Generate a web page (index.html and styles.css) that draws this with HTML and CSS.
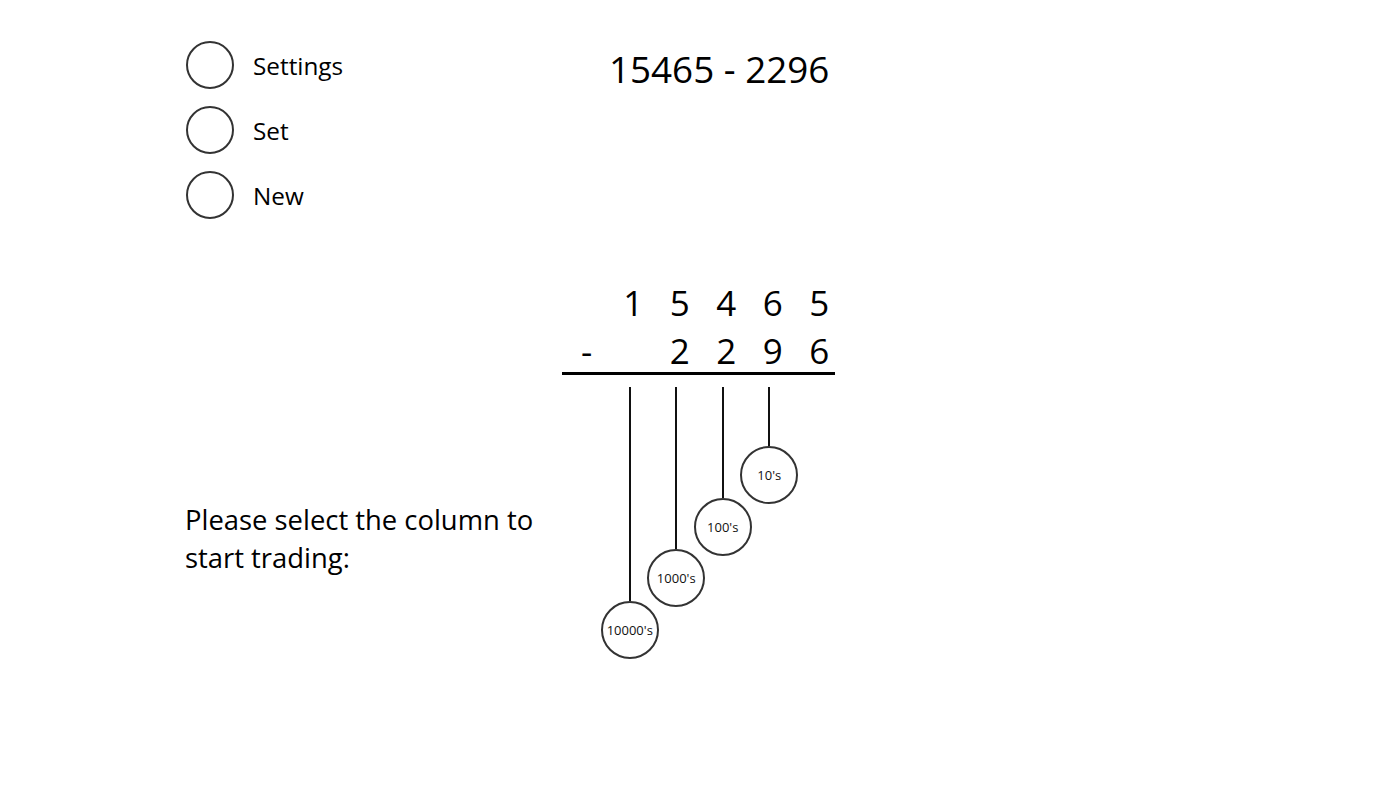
FILE: index.html
```html
<!DOCTYPE html>
<html lang="en">
<head>
    <meta charset="UTF-8">
    <title>Subtraction - Trading</title>
    <link rel="stylesheet" href="styles.css">
</head>
<body>
    <div class="page">
        <div class="top">
            <div class="menu">
                <div class="menu-item"><span class="round-btn"></span><span class="menu-label">Settings</span></div>
                <div class="menu-item"><span class="round-btn"></span><span class="menu-label">Set</span></div>
                <div class="menu-item"><span class="round-btn"></span><span class="menu-label">New</span></div>
            </div>
            <div class="title">15465 - 2296</div>
        </div>

        <div class="work">
            <p class="prompt">Please select the column to start trading:</p>

            <div class="sum">
                <div class="row">
                    <span></span><span>1</span><span>5</span><span>4</span><span>6</span><span>5</span>
                </div>
                <div class="row">
                    <span>-</span><span></span><span>2</span><span>2</span><span>9</span><span>6</span>
                </div>
                <div class="rule"></div>

                <div class="columns">
                    <span></span>
                    <div class="pend p10000"><span class="string"></span><button class="bob">10000's</button></div>
                    <div class="pend p1000"><span class="string"></span><button class="bob">1000's</button></div>
                    <div class="pend p100"><span class="string"></span><button class="bob">100's</button></div>
                    <div class="pend p10"><span class="string"></span><button class="bob">10's</button></div>
                </div>
            </div>
        </div>
    </div>
</body>
</html>
```

FILE: styles.css
```css
body {
    margin: 0;
    font-family: 'Open Sans', 'Noto Sans', sans-serif;
    color: #000000;
    background-color: #ffffff;
}

.page {
    padding: 41px 0 0 185px;
}

.top {
    display: flex;
}

.menu {
    width: 424px;
    display: flex;
    flex-direction: column;
    gap: 17px;
}

.menu-item {
    display: flex;
    align-items: center;
    gap: 19px;
}

.round-btn {
    width: 44px;
    height: 44px;
    margin-left: 1px;
    border: 2px solid #333333;
    border-radius: 50%;
}

.menu-label {
    font-size: 24.3px;
}

.title {
    font-size: 36.8px;
    line-height: 48px;
    margin-top: 4px;
}

.work {
    display: flex;
    margin-top: 60px;
}

.prompt {
    width: 377px;
    margin: 222px 0 0 0;
    font-size: 27.4px;
    line-height: 38px;
}

.sum {
    width: 273px;
}

.row,
.columns {
    display: grid;
    grid-template-columns: repeat(6, 46.5px);
}

.row span {
    text-align: center;
    font-size: 35px;
    line-height: 48px;
    padding-left: 3px;
}

.rule {
    height: 3px;
    margin-top: -3px;
    background-color: #000000;
}

.columns {
    margin-top: 12px;
}

.pend {
    display: flex;
    flex-direction: column;
    align-items: center;
    padding-right: 4px;
}

.string {
    width: 2px;
    background-color: #111111;
}

.p10 .string { height: 59px; }
.p100 .string { height: 111px; }
.p1000 .string { height: 162px; }
.p10000 .string { height: 214px; }

.bob {
    flex: none;
    width: 58px;
    height: 58px;
    padding: 0;
    border: 2px solid #333333;
    border-radius: 50%;
    background-color: #ffffff;
    font-family: 'Open Sans', 'Noto Sans', sans-serif;
    font-size: 13px;
    color: #111111;
    cursor: pointer;
}
```
